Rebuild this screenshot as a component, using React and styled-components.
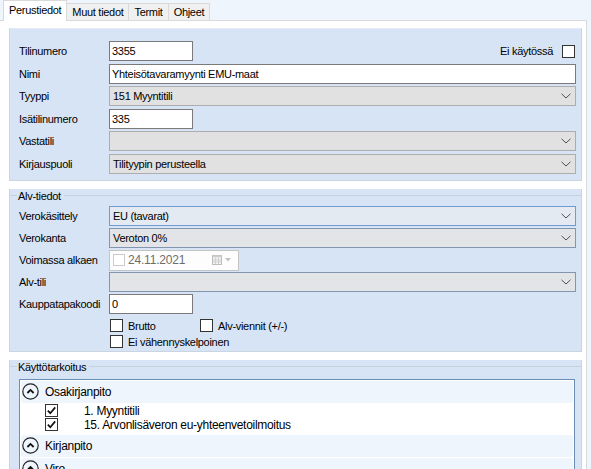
import React from "react";
import styled, { createGlobalStyle } from "styled-components";

const GlobalStyle = createGlobalStyle`
  html, body { margin: 0; padding: 0; }
  body {
    background: #eef5fd;
    font-family: "Liberation Sans", Arial, sans-serif;
    font-size: 11px;
    letter-spacing: -0.3px;
    color: #000;
    overflow: hidden;
  }
`;

const Window = styled.div`
  width: 591px;
  height: 469px;
  overflow: hidden;
  display: flex;
  flex-direction: column;
`;

/* välilehdet */
const TabStrip = styled.div`
  display: flex;
  align-items: flex-end;
  height: 22px;
  padding-left: 3px;
`;

const Tab = styled.div`
  position: relative;
  box-sizing: border-box;
  height: ${(p) => (p.$active ? 21 : 17)}px;
  margin-bottom: ${(p) => (p.$active ? -1 : 0)}px;
  margin-left: ${(p) => (p.$first ? 0 : -1)}px;
  z-index: ${(p) => (p.$active ? 1 : 0)};
  padding: 0 5px ${(p) => (p.$active ? 2 : 0)}px;
  display: flex;
  align-items: center;
  background: ${(p) => (p.$active ? "#fff" : "#f0f0f0")};
  border: 1px solid #d9d9d9;
  border-bottom: none;
`;

const Panel = styled.div`
  width: 587px;
  box-sizing: border-box;
  flex: 1;
  background: #fff;
  border-top: 1px solid #d9d9d9;
  border-right: 1px solid #d9d9d9;
  padding: 7px 4px 0 9px;
  display: flex;
  flex-direction: column;
  gap: 8px;
`;

/* ryhmät */
const Group = styled.div`
  background: #d7e4f6;
  border: 1px solid #cbd5e1;
  border-top: ${(p) => (p.$titled ? "none" : "1px solid #e3eaf4")};
  padding: ${(p) => (p.$titled ? "0 5px 1px 9px" : "12px 5px 6px 9px")};
  display: flex;
  flex-direction: column;
  flex-shrink: 0;
`;

const GroupTitle = styled.div`
  display: flex;
  align-items: center;
  height: 14px;
  margin: 0 -5px 0 -9px;
  gap: 1px;
  white-space: nowrap;

  &::before {
    content: "";
    width: 7px;
    border-top: 1px solid #c7d1de;
  }
  &::after {
    content: "";
    flex: 1;
    margin-left: 2px;
    border-top: 1px solid #c7d1de;
  }
`;

const Rows = styled.div`
  display: flex;
  flex-direction: column;
  gap: ${(p) => p.$gap}px;
  margin-top: ${(p) => p.$top || 0}px;
`;

const FormRow = styled.div`
  display: grid;
  grid-template-columns: 90px 1fr;
  align-items: center;
  height: 20px;
`;

const Label = styled.span`
  white-space: nowrap;
`;

const Inline = styled.div`
  display: flex;
  align-items: center;
`;

const TextBox = styled.div`
  box-sizing: border-box;
  width: ${(p) => (p.$width ? `${p.$width}px` : "auto")};
  height: 20px;
  border: 1px solid #7a7a7a;
  background: #fff;
  padding-left: 2px;
  display: flex;
  align-items: center;
  white-space: nowrap;
`;

const selectColors = {
  plain: { border: "#adadad", bg: "#e1e1e1" },
  focus: { border: "#6f9bd1", bg: "#e4eaf2" },
  blue: { border: "#8297ae", bg: "#e2e4e7" },
};

const SelectBox = styled.div`
  box-sizing: border-box;
  height: 20px;
  border: 1px solid ${(p) => selectColors[p.$variant].border};
  background: ${(p) => selectColors[p.$variant].bg};
  padding: 0 4px 0 3px;
  display: flex;
  align-items: center;
  justify-content: space-between;
  white-space: nowrap;
`;

const Chevron = () => (
  <svg width="10" height="6" viewBox="0 0 10 6">
    <polyline points="0.5,0.8 5,5 9.5,0.8" fill="none" stroke="#505050" strokeWidth="1" />
  </svg>
);

const Select = ({ value, variant = "plain" }) => (
  <SelectBox $variant={variant}>
    <span>{value}</span>
    <Chevron />
  </SelectBox>
);

const Box = styled.span`
  box-sizing: border-box;
  width: ${(p) => p.$size || 13}px;
  height: ${(p) => p.$size || 13}px;
  border: 1px solid ${(p) => (p.$disabled ? "#cccccc" : "#333")};
  background: #fff;
  display: inline-flex;
  align-items: center;
  justify-content: center;
  flex-shrink: 0;
  margin-left: ${(p) => p.$ml || 0}px;
  margin-right: ${(p) => p.$mr || 0}px;
`;

const Tick = () => (
  <svg width="11" height="11" viewBox="0 0 11 11">
    <polyline points="1.8,5.6 4.3,8.2 9.2,2.4" fill="none" stroke="#111" strokeWidth="1.7" />
  </svg>
);

const Spacer = styled.div`
  flex: 1;
`;

/* päivämäärä */
const DateBox = styled.div`
  box-sizing: border-box;
  width: 130px;
  height: 21px;
  border: 1px solid #c4c4c4;
  background: #fdfdfd;
  padding: 0 7px 0 3px;
  display: flex;
  align-items: center;
  gap: 3px;
  color: #6d6d6d;
  font-size: 12px;
  letter-spacing: -0.2px;
`;

const DateIcons = styled.div`
  margin-left: auto;
  display: flex;
  align-items: center;
  gap: 3px;
`;

const CalendarIcon = () => (
  <svg width="10" height="10" viewBox="0 0 10 10">
    <rect x="0.5" y="0.5" width="9" height="9" fill="#f4f4f4" stroke="#bdbdbd" />
    <rect x="0.5" y="0.5" width="9" height="2" fill="#cfcfcf" />
    <path d="M3.5 3v6M6.5 3v6M1 5h8M1 7h8" stroke="#d0d0d0" strokeWidth="1" />
  </svg>
);

const DownTriangle = () => (
  <svg width="6" height="4" viewBox="0 0 6 4">
    <polygon points="0,0 6,0 3,3.5" fill="#c2c2c2" />
  </svg>
);

/* valintaruudut */
const CheckRow = styled.div`
  display: flex;
  align-items: center;
  height: 16px;
  padding-left: 91px;
`;

const CheckItem = styled.label`
  display: flex;
  align-items: center;
  gap: 5px;
  width: ${(p) => (p.$width ? `${p.$width}px` : "auto")};
  white-space: nowrap;
`;

/* puu */
const Tree = styled.div`
  margin-right: 1px;
  height: 130px;
  border: 1px solid #6b8db3;
  padding: 1px;
  background: #fff;
  display: flex;
  flex-direction: column;
  font-size: 12px;
  letter-spacing: -0.3px;
`;

const TreeHeader = styled.div`
  height: 22px;
  flex-shrink: 0;
  margin-top: ${(p) => p.$mt || 0}px;
  background: #eef5fd;
  border-radius: 3px;
  display: flex;
  align-items: center;
  gap: 6px;
  padding-left: 1px;
`;

const TreeChildren = styled.div`
  padding: 1px 0 3px;
  display: flex;
  flex-direction: column;
`;

const TreeChild = styled.div`
  display: grid;
  grid-template-columns: 24px 13px 26px auto;
  align-items: center;
  height: 14px;
  white-space: nowrap;

  & > span:last-child {
    grid-column: 4;
  }
`;

const ExpandIcon = () => (
  <svg width="17" height="17" viewBox="0 0 17 17">
    <circle cx="8.5" cy="8.5" r="7.7" fill="none" stroke="#222" strokeWidth="1.2" />
    <polyline points="5.4,10 8.5,6.9 11.6,10" fill="none" stroke="#111" strokeWidth="1.8" />
  </svg>
);

const tabs = ["Perustiedot", "Muut tiedot", "Termit", "Ohjeet"];

const treeData = [
  {
    title: "Osakirjanpito",
    items: ["1. Myyntitili", "15. Arvonlisäveron eu-yhteenvetoilmoitus"],
  },
  { title: "Kirjanpito", items: [] },
  { title: "Viro", items: [] },
];

const App = () => {
  return (
    <>
      <GlobalStyle />
      <Window>
        <TabStrip>
          {tabs.map((t, i) => (
            <Tab key={t} $active={i === 0} $first={i === 0}>
              {t}
            </Tab>
          ))}
        </TabStrip>

        <Panel>
          <Group>
            <Rows $gap={2.5}>
              <FormRow>
                <Label>Tilinumero</Label>
                <Inline>
                  <TextBox $width={84}>3355</TextBox>
                  <Spacer />
                  <Label>Ei käytössä</Label>
                  <Box $ml={9} $mr={1} />
                </Inline>
              </FormRow>
              <FormRow>
                <Label>Nimi</Label>
                <TextBox>Yhteisötavaramyynti EMU-maat</TextBox>
              </FormRow>
              <FormRow>
                <Label>Tyyppi</Label>
                <Select value="151 Myyntitili" />
              </FormRow>
              <FormRow>
                <Label>Isätilinumero</Label>
                <TextBox $width={84}>335</TextBox>
              </FormRow>
              <FormRow>
                <Label>Vastatili</Label>
                <Select value="" />
              </FormRow>
              <FormRow>
                <Label>Kirjauspuoli</Label>
                <Select value="Tilityypin perusteella" />
              </FormRow>
            </Rows>
          </Group>

          <Group $titled>
            <GroupTitle>Alv-tiedot</GroupTitle>
            <Rows $gap={2} $top={3}>
              <FormRow>
                <Label>Verokäsittely</Label>
                <Select value="EU (tavarat)" variant="focus" />
              </FormRow>
              <FormRow>
                <Label>Verokanta</Label>
                <Select value="Veroton 0%" variant="blue" />
              </FormRow>
              <FormRow>
                <Label>Voimassa alkaen</Label>
                <DateBox>
                  <Box $size={12} $disabled />
                  <span>24.11.2021</span>
                  <DateIcons>
                    <CalendarIcon />
                    <DownTriangle />
                  </DateIcons>
                </DateBox>
              </FormRow>
              <FormRow>
                <Label>Alv-tili</Label>
                <Select value="" variant="blue" />
              </FormRow>
              <FormRow>
                <Label>Kauppatapakoodi</Label>
                <TextBox $width={84}>0</TextBox>
              </FormRow>
            </Rows>
            <Rows $gap={0} $top={4}>
              <CheckRow>
                <CheckItem $width={90}>
                  <Box />
                  Brutto
                </CheckItem>
                <CheckItem>
                  <Box />
                  Alv-viennit (+/-)
                </CheckItem>
              </CheckRow>
              <CheckRow>
                <CheckItem>
                  <Box />
                  Ei vähennyskelpoinen
                </CheckItem>
              </CheckRow>
            </Rows>
          </Group>

          <Group $titled>
            <GroupTitle>Käyttötarkoitus</GroupTitle>
            <Rows $gap={0} $top={5}>
              <Tree>
                {treeData.map((node, i) => (
                  <React.Fragment key={node.title}>
                    <TreeHeader $mt={i === 2 ? 1 : 0}>
                      <ExpandIcon />
                      <span>{node.title}</span>
                    </TreeHeader>
                    {node.items.length > 0 && (
                      <TreeChildren>
                        {node.items.map((item) => (
                          <TreeChild key={item}>
                            <span />
                            <Box>
                              <Tick />
                            </Box>
                            <span>{item}</span>
                          </TreeChild>
                        ))}
                      </TreeChildren>
                    )}
                  </React.Fragment>
                ))}
              </Tree>
            </Rows>
          </Group>
        </Panel>
      </Window>
    </>
  );
};

export default App;
